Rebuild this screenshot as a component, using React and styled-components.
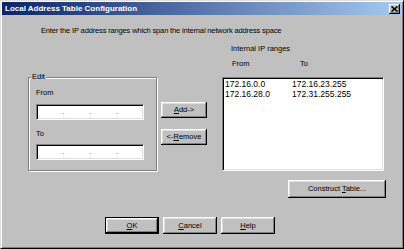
import React from 'react';
import styled, { createGlobalStyle } from 'styled-components';

const GlobalStyle = createGlobalStyle`
  html, body {
    margin: 0;
    padding: 0;
    background: #c0c0c0;
  }
  body {
    font-family: "Liberation Sans", Arial, sans-serif;
    font-size: 7.5px;
    color: #000;
  }
`;

const Window = styled.div`
  width: 404px;
  height: 249px;
  box-sizing: border-box;
  background: #c0c0c0;
  border: 1px solid;
  border-color: #dfdfdf #000 #000 #dfdfdf;
  box-shadow: inset 1px 1px #fff, inset -1px -1px #808080;
  padding: 1px;
  display: flex;
  flex-direction: column;
`;

const TitleBar = styled.div`
  height: 13px;
  display: flex;
  align-items: center;
  justify-content: space-between;
  padding: 0 2px 0 2px;
  background: linear-gradient(to right, #0a246a, #a6caf0);
`;

const Title = styled.span`
  color: #fff;
  font-weight: bold;
  font-size: 8px;
  line-height: 13px;
  padding-left: 1px;
`;

const CloseBox = styled.div`
  width: 11px;
  height: 10px;
  box-sizing: border-box;
  background: #c0c0c0;
  box-shadow: inset -1px -1px #000, inset 1px 1px #fff, inset -2px -2px #808080;
  display: flex;
  align-items: center;
  justify-content: center;
`;

const Intro = styled.div`
  margin: 11px 0 0 39px;
  line-height: 10px;
  letter-spacing: -0.15px;
`;

const Main = styled.div`
  display: flex;
  align-items: flex-start;
  margin: 8px 0 0 26px;
`;

const Group = styled.div`
  position: relative;
  margin-top: 33px;
  width: 129px;
  height: 94px;
  box-sizing: border-box;
  border: 1px solid #808080;
  box-shadow: inset 1px 1px #fff, 1px 1px #fff;
  padding: 10px 0 0 7px;
`;

const GroupLabel = styled.span`
  position: absolute;
  top: -6px;
  left: 2px;
  padding: 0 1px;
  line-height: 10px;
  background: #c0c0c0;
`;

const FieldLabel = styled.div`
  line-height: 10px;
  margin-top: ${p => p.$gap || 0}px;
`;

const IpField = styled.div`
  display: flex;
  align-items: center;
  width: 108px;
  height: 16px;
  box-sizing: border-box;
  margin-top: ${p => p.$gap}px;
  background: #fff;
  border: 1px solid;
  border-color: #808080 #fff #fff #808080;
  box-shadow: inset 1px 1px #000, inset -1px -1px #dfdfdf;
  padding: 0 1px;
`;

const Octet = styled.span`
  flex: 1;
`;

const Dot = styled.span`
  width: 3px;
  text-align: center;
  line-height: 10px;
  color: #404040;
`;

const ButtonColumn = styled.div`
  display: flex;
  flex-direction: column;
  gap: 11px;
  margin: 58px 0 0 4px;
`;

const Button = styled.div`
  width: ${p => p.$w}px;
  height: ${p => p.$h || 16}px;
  box-sizing: border-box;
  display: flex;
  align-items: center;
  justify-content: center;
  background: #c0c0c0;
  border: ${p => (p.$default ? '1px solid #000' : 'none')};
  box-shadow: inset -1px -1px #000, inset 1px 1px #fff, inset -2px -2px #808080,
    inset 2px 2px #dfdfdf;
  line-height: 10px;

  u {
    text-decoration-thickness: 1px;
    text-underline-offset: 1px;
  }
`;

const RightColumn = styled.div`
  display: flex;
  flex-direction: column;
  margin-left: 15px;
  width: 162px;
`;

const Heading = styled.div`
  line-height: 10px;
  padding-left: 9px;
`;

const ColumnHeads = styled.div`
  display: flex;
  line-height: 10px;
  margin-top: 5px;
  padding-left: 10px;
`;

const ListBox = styled.div`
  margin-top: 8px;
  height: 94px;
  box-sizing: border-box;
  background: #fff;
  border: 1px solid;
  border-color: #808080 #fff #fff #808080;
  box-shadow: inset 1px 1px #000, inset -1px -1px #dfdfdf;
  padding: 1px 2px;
`;

const ListRow = styled.div`
  display: flex;
  font-size: 8.5px;
  line-height: 10px;
`;

const Cell = styled.span`
  width: ${p => p.$w}px;
`;

const ConstructRow = styled.div`
  display: flex;
  justify-content: flex-end;
  margin-top: 9px;
  padding-right: 16px;
`;

const FooterRow = styled.div`
  display: flex;
  gap: 4px;
  margin-top: 19px;
  padding-left: 103px;
`;

function IpInput({ gap }) {
  return (
    <IpField $gap={gap}>
      <Octet />
      <Dot>.</Dot>
      <Octet />
      <Dot>.</Dot>
      <Octet />
      <Dot>.</Dot>
      <Octet />
    </IpField>
  );
}

const ranges = [
  { from: '172.16.0.0', to: '172.16.23.255' },
  { from: '172.16.28.0', to: '172.31.255.255' },
];

export default function App() {
  return (
    <>
      <GlobalStyle />
      <Window>
        <TitleBar>
          <Title>Local Address Table Configuration</Title>
          <CloseBox>
            <svg width="7" height="6" viewBox="0 0 7 6">
              <path d="M0.5 0.5 L6.5 5.5 M6.5 0.5 L0.5 5.5" stroke="#000" strokeWidth="1.6" />
            </svg>
          </CloseBox>
        </TitleBar>

        <Intro>Enter the IP address ranges which span the internal network address space</Intro>

        <Main>
          <Group>
            <GroupLabel>Edit</GroupLabel>
            <FieldLabel>From</FieldLabel>
            <IpInput gap={6} />
            <FieldLabel $gap={9}>To</FieldLabel>
            <IpInput gap={5} />
          </Group>

          <ButtonColumn>
            <Button $w={46}><span><u>A</u>dd-&gt;</span></Button>
            <Button $w={46}><span>&lt;-<u>R</u>emove</span></Button>
          </ButtonColumn>

          <RightColumn>
            <Heading>Internal IP ranges</Heading>
            <ColumnHeads>
              <Cell $w={68}>From</Cell>
              <Cell>To</Cell>
            </ColumnHeads>
            <ListBox>
              {ranges.map(r => (
                <ListRow key={r.from}>
                  <Cell $w={67}>{r.from}</Cell>
                  <Cell>{r.to}</Cell>
                </ListRow>
              ))}
            </ListBox>
          </RightColumn>
        </Main>

        <ConstructRow>
          <Button $w={98} $h={18}><span>Construct <u>T</u>able...</span></Button>
        </ConstructRow>

        <FooterRow>
          <Button $w={54} $h={17} $default><span><u>O</u>K</span></Button>
          <Button $w={54} $h={17}><span><u>C</u>ancel</span></Button>
          <Button $w={54} $h={17}><span><u>H</u>elp</span></Button>
        </FooterRow>
      </Window>
    </>
  );
}
